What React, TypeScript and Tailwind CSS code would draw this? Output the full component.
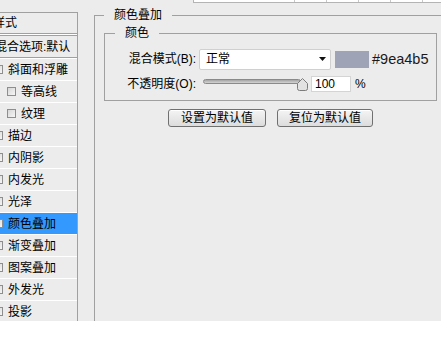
import React from "react";

type Item = { label: string; sub?: boolean; active?: boolean };

const items: Item[] = [
  { label: "斜面和浮雕" },
  { label: "等高线", sub: true },
  { label: "纹理", sub: true },
  { label: "描边" },
  { label: "内阴影" },
  { label: "内发光" },
  { label: "光泽" },
  { label: "颜色叠加", active: true },
  { label: "渐变叠加" },
  { label: "图案叠加" },
  { label: "外发光" },
  { label: "投影" },
];

function Box() {
  return (
    <span className="inline-block w-[9px] h-[9px] shrink-0 border border-[#8e8e8e] bg-linear-to-br from-[#d6d6d6] to-[#f6f6f6]" />
  );
}

function Btn({ w, children }: { w: string; children: React.ReactNode }) {
  return (
    <div
      className={`${w} h-[18px] flex items-center justify-center rounded-[3px] border border-[#707070] bg-linear-to-b from-[#f4f4f4] to-[#dcdcdc] shadow-[inset_0_1px_0_#ffffff]`}
    >
      {children}
    </div>
  );
}

export default function App() {
  return (
    <div className="w-[441px] h-[337px] bg-white overflow-hidden font-['Liberation_Sans','Noto_Sans_CJK_SC',sans-serif] text-[12px] leading-[16px] text-black">
      <div className="h-[321px] bg-[#ececec] overflow-hidden flex flex-col">
        {/* top strip */}
        <div className="h-[3px] flex shrink-0">
          <div className="w-[193px] shrink-0" />
          <div className="flex-1 flex bg-white border-b border-l border-[#b4b4b4]">
            <div className="w-[101px] border-r border-[#c8c8c8]" />
            <div className="w-[32px] border-r border-[#c8c8c8]" />
            <div className="w-[32px] border-r border-[#c8c8c8]" />
            <div className="w-[32px] border-r border-[#c8c8c8]" />
            <div className="w-[32px] border-r border-[#c8c8c8]" />
          </div>
        </div>

        <div className="flex items-start">
          {/* left styles list */}
          <div className="w-[78px] h-[330px] mt-[9px] shrink-0 overflow-hidden border-t border-r border-[#a0a0a0]">
            <div className="-ml-[14px]">
              <div className="h-[21px] border-b border-[#a0a0a0] flex items-center pl-[7px] whitespace-nowrap">
                样式
              </div>
              <div className="h-[2px] bg-white border-b border-[#a0a0a0]" />
              <div className="h-[22px] border-b border-[#a0a0a0] flex items-center pl-[9px] whitespace-nowrap">
                混合选项:默认
              </div>
              <div className="h-[1px] bg-white" />
              {items.map((it) => (
                <div
                  key={it.label}
                  className={`h-[22px] border-b border-white flex items-center whitespace-nowrap ${
                    it.sub ? "pl-[21px]" : "pl-[8px]"
                  } ${it.active ? "bg-[#3399ff]" : ""}`}
                >
                  <Box />
                  <span className="ml-[5px]">{it.label}</span>
                </div>
              ))}
            </div>
          </div>

          {/* right: 颜色叠加 */}
          <fieldset className="ml-[16px] mt-[4px] w-[353px] h-[330px] shrink-0 border border-[#a0a0a0] pl-[9px] pt-[2px]">
            <legend className="px-[10px] leading-[16px]">颜色叠加</legend>

            <fieldset className="w-[333px] border border-[#a0a0a0] pl-[10px] pt-[7px] pb-[8px]">
              <legend className="px-[10px] leading-[16px]">颜色</legend>

              {/* blend mode row */}
              <div className="h-[22px] flex items-center">
                <span className="w-[81px] text-right whitespace-nowrap">混合模式(B):</span>
                <div className="ml-[3px] w-[132px] h-[21px] bg-white border border-[#d0d0d0] rounded-[2px] flex items-center pl-[6px] pr-[4px]">
                  <span className="flex-1">正常</span>
                  <svg width="7" height="4" viewBox="0 0 7 4">
                    <path d="M0 0 H7 L3.5 4 Z" fill="#111111" />
                  </svg>
                </div>
                <div className="ml-[4px] w-[34px] h-[17px] bg-[#9ea4b5]" />
                <span className="ml-[3px] text-[14.5px] text-[#1a1a1a]">#9ea4b5</span>
              </div>

              {/* opacity row */}
              <div className="mt-[6px] h-[16px] flex items-center">
                <span className="w-[81px] text-right whitespace-nowrap">不透明度(O):</span>
                <div className="relative ml-[7px] w-[105px] h-[16px]">
                  <div className="absolute left-0 top-[3px] w-[98px] h-[5px] rounded-full border border-[#8a8a8a] bg-linear-to-b from-[#a4a4a4] to-[#d4d4d4]" />
                  <svg
                    className="absolute left-[94px] top-[2px]"
                    width="11"
                    height="13"
                    viewBox="0 0 11 13"
                  >
                    <path
                      d="M5.5 0.5 L10.5 5.5 V10.5 Q10.5 12.5 8.5 12.5 H2.5 Q0.5 12.5 0.5 10.5 V5.5 Z"
                      fill="#e2e2e2"
                      stroke="#7c7c7c"
                    />
                  </svg>
                </div>
                <div className="ml-[3px] w-[40px] h-[16px] bg-white border border-[#d4d4d4] flex items-center pl-[3px]">
                  100
                </div>
                <span className="ml-[4px]">%</span>
              </div>
            </fieldset>

            <div className="w-[333px] mt-[8px] flex justify-center gap-[11px]">
              <Btn w="w-[98px]">设置为默认值</Btn>
              <Btn w="w-[96px]">复位为默认值</Btn>
            </div>
          </fieldset>
        </div>
      </div>
    </div>
  );
}
